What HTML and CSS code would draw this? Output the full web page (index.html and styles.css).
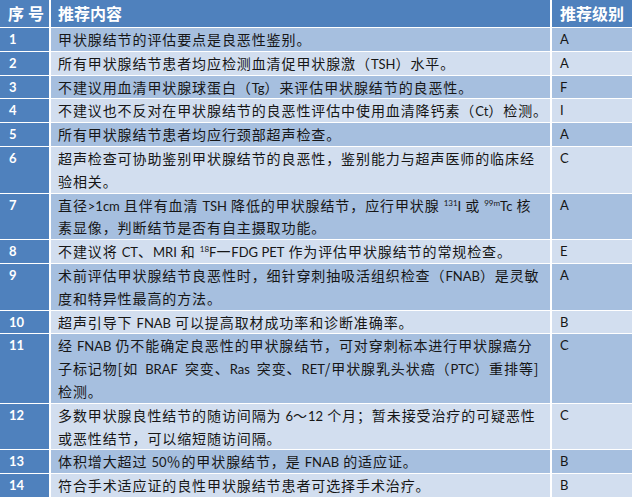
FILE: index.html
```html
<!DOCTYPE html>
<html lang="zh-CN">
<head>
<meta charset="utf-8">
<title>甲状腺结节推荐</title>
<link rel="stylesheet" href="styles.css">
</head>
<body>
<table class="rec">
  <colgroup>
    <col class="c-no">
    <col class="c-text">
    <col class="c-grade">
  </colgroup>
  <thead>
    <tr>
      <th class="h-no">序号</th>
      <th class="h-text">推荐内容</th>
      <th class="h-grade">推荐级别</th>
    </tr>
  </thead>
  <tbody>
    <tr class="odd"><td class="no">1</td><td class="text">甲状腺结节的评估要点是良恶性鉴别。</td><td class="grade">A</td></tr>
    <tr class="even"><td class="no">2</td><td class="text">所有甲状腺结节患者均应检测血清促甲状腺激（<span class="en">TSH</span>）水平。</td><td class="grade">A</td></tr>
    <tr class="odd"><td class="no">3</td><td class="text">不建议用血清甲状腺球蛋白（<span class="en">Tg</span>）来评估甲状腺结节的良恶性。</td><td class="grade">F</td></tr>
    <tr class="even"><td class="no">4</td><td class="text">不建议也不反对在甲状腺结节的良恶性评估中使用血清降钙素（<span class="en">Ct</span>）检测。</td><td class="grade">I</td></tr>
    <tr class="odd"><td class="no">5</td><td class="text">所有甲状腺结节患者均应行颈部超声检查。</td><td class="grade">A</td></tr>
    <tr class="even"><td class="no">6</td><td class="text">超声检查可协助鉴别甲状腺结节的良恶性，鉴别能力与超声医师的临床经<br>验相关。</td><td class="grade">C</td></tr>
    <tr class="odd"><td class="no">7</td><td class="text">直径<span class="en">&gt;1cm</span> 且伴有血清 <span class="en">TSH</span> 降低的甲状腺结节，应行甲状腺 <sup class="sup">131</sup><span class="en">I</span> 或 <sup class="sup">99m</sup><span class="en">Tc</span> 核<br>素显像，判断结节是否有自主摄取功能。</td><td class="grade">A</td></tr>
    <tr class="even"><td class="no">8</td><td class="text">不建议将 <span class="en">CT</span>、<span class="en">MRI</span> 和 <sup class="sup">18</sup><span class="en">F</span>一<span class="en">FDG PET</span> 作为评估甲状腺结节的常规检查。</td><td class="grade">E</td></tr>
    <tr class="odd"><td class="no">9</td><td class="text">术前评估甲状腺结节良恶性时，细针穿刺抽吸活组织检查（<span class="en">FNAB</span>）是灵敏<br>度和特异性最高的方法。</td><td class="grade">A</td></tr>
    <tr class="even"><td class="no">10</td><td class="text">超声引导下 <span class="en">FNAB</span> 可以提高取材成功率和诊断准确率。</td><td class="grade">B</td></tr>
    <tr class="odd"><td class="no">11</td><td class="text">经 <span class="en">FNAB</span> 仍不能确定良恶性的甲状腺结节，可对穿刺标本进行甲状腺癌分<br><span class="just">子标记物[如 <span class="en">BRAF</span> 突变、<span class="en">Ras</span> 突变、<span class="en">RET</span>/甲状腺乳头状癌（<span class="en">PTC</span>）重排等]</span><br>检测。</td><td class="grade">C</td></tr>
    <tr class="even"><td class="no">12</td><td class="text">多数甲状腺良性结节的随访间隔为 <span class="en">6</span>～<span class="en">12</span> 个月；暂未接受治疗的可疑恶性<br>或恶性结节，可以缩短随访间隔。</td><td class="grade">C</td></tr>
    <tr class="odd"><td class="no">13</td><td class="text">体积增大超过 <span class="en">50</span>％的甲状腺结节，是 <span class="en">FNAB</span> 的适应证。</td><td class="grade">B</td></tr>
    <tr class="even"><td class="no">14</td><td class="text">符合手术适应证的良性甲状腺结节患者可选择手术治疗。</td><td class="grade">B</td></tr>
  </tbody>
</table>
</body>
</html>
```

FILE: styles.css
```css
html, body {
  margin: 0;
  padding: 0;
  background: #ffffff;
}

body {
  font-family: "Noto Sans CJK SC", "Noto Sans", sans-serif;
  color: #161616;
}

.rec {
  width: 632px;
  table-layout: fixed;
  border-collapse: collapse;
}

.c-no { width: 50px; }
.c-text { width: 501px; }
.c-grade { width: 81px; }

.rec th,
.rec td {
  padding: 0;
  border-right: 2px solid #ffffff;
  border-bottom: 1px solid #ffffff;
  text-align: left;
  vertical-align: top;
}

.rec th:last-child,
.rec td:last-child {
  border-right: none;
}

.rec th {
  background: #4f81bd;
  color: #ffffff;
  font-weight: 700;
  font-size: 16px;
  line-height: 27px;
  height: 27px;
}

.h-no {
  padding-left: 8px !important;
  letter-spacing: 4px;
}

.h-text {
  padding-left: 7px !important;
}

.h-grade {
  padding-left: 8px !important;
}

.rec td {
  font-size: 14px;
  line-height: 22.8px;
}

.rec td.no {
  background: #4f81bd;
  color: #ffffff;
  font-family: Lato, "Open Sans", sans-serif;
  font-weight: 700;
  font-size: 13px;
  padding-left: 9px;
}

.rec td.text {
  padding-left: 7px;
  letter-spacing: 0.9px;
  white-space: nowrap;
}

.rec td.grade {
  font-family: Lato, "Open Sans", sans-serif;
  font-size: 13px;
  padding-left: 8px;
}

.odd td.text,
.odd td.grade {
  background: #a6bfdf;
}

.even td.text,
.even td.grade {
  background: #d2deef;
}

.en {
  font-family: Lato, "Open Sans", sans-serif;
  font-size: 13px;
  letter-spacing: 0;
  line-height: 1;
}

.sup {
  font-family: Lato, "Open Sans", sans-serif;
  font-size: 8px;
  letter-spacing: 0;
  line-height: 0;
  vertical-align: 5px;
}

.just {
  word-spacing: 3px;
}
```
